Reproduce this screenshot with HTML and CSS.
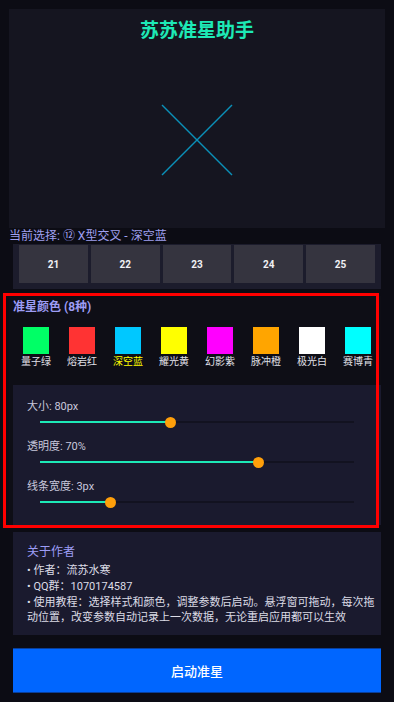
FILE: index.html
```html
<!DOCTYPE html>
<html lang="zh">
<head>
<meta charset="utf-8">
<title>苏苏准星助手</title>
<link rel="stylesheet" href="styles.css">
</head>
<body>
<div class="page">
  <section class="preview">
    <h1 class="title">苏苏准星助手</h1>
    <svg class="cross" width="72" height="72" viewBox="0 0 72 72">
      <line x1="1" y1="1" x2="71" y2="71" stroke="#0a90b8" stroke-width="1.4"/>
      <line x1="71" y1="1" x2="1" y2="71" stroke="#0a90b8" stroke-width="1.4"/>
    </svg>
  </section>
  <div class="current">当前选择: ⑫ X型交叉 - 深空蓝</div>
  <div class="styles-row">
    <div class="style-btn">21</div>
    <div class="style-btn">22</div>
    <div class="style-btn">23</div>
    <div class="style-btn">24</div>
    <div class="style-btn">25</div>
  </div>
  <section class="colors">
    <div class="highlight"></div>
    <div class="colors-title">准星颜色 (8种)</div>
    <div class="swatches">
      <div class="swatch-item"><div class="swatch" style="background:#00ff66"></div><span class="swatch-label">量子绿</span></div>
      <div class="swatch-item"><div class="swatch" style="background:#ff3333"></div><span class="swatch-label">熔岩红</span></div>
      <div class="swatch-item"><div class="swatch" style="background:#00c8ff"></div><span class="swatch-label selected">深空蓝</span></div>
      <div class="swatch-item"><div class="swatch" style="background:#ffff00"></div><span class="swatch-label">耀光黄</span></div>
      <div class="swatch-item"><div class="swatch" style="background:#ff00ff"></div><span class="swatch-label">幻影紫</span></div>
      <div class="swatch-item"><div class="swatch" style="background:#ffa500"></div><span class="swatch-label">脉冲橙</span></div>
      <div class="swatch-item"><div class="swatch" style="background:#ffffff"></div><span class="swatch-label">极光白</span></div>
      <div class="swatch-item"><div class="swatch" style="background:#00ffff"></div><span class="swatch-label">赛博青</span></div>
    </div>
    <div class="sliders">
      <div class="slider-item">
        <div class="slider-label">大小: 80px</div>
        <div class="slider"><div class="track"><div class="fill" style="width:41.7%"><span class="thumb"></span></div></div></div>
      </div>
      <div class="slider-item">
        <div class="slider-label">透明度: 70%</div>
        <div class="slider"><div class="track"><div class="fill" style="width:69.7%"><span class="thumb"></span></div></div></div>
      </div>
      <div class="slider-item">
        <div class="slider-label">线条宽度: 3px</div>
        <div class="slider"><div class="track"><div class="fill" style="width:22.3%"><span class="thumb"></span></div></div></div>
      </div>
    </div>
  </section>
  <section class="about">
    <div class="about-title">关于作者</div>
    <p class="about-line">• 作者：流苏水寒</p>
    <p class="about-line">• QQ群：1070174587</p>
    <p class="about-line">• 使用教程：选择样式和颜色，调整参数后启动。悬浮窗可拖动，每次拖动位置，改变参数自动记录上一次数据，无论重启应用都可以生效</p>
  </section>
  <button class="start">启动准星</button>
</div>
</body>
</html>
```
FILE: styles.css
```css
* { box-sizing: border-box; }
html, body {
  margin: 0;
  padding: 0;
  background: #0c0c14;
  height: 702px;
  overflow: hidden;
}
body {
  font-family: Roboto, "Noto Sans CJK SC", sans-serif;
  color: #dcdce6;
}
.page {
  display: flex;
  flex-direction: column;
  padding-top: 9px;
}
.preview {
  margin: 0 9px;
  height: 219px;
  background: #151520;
  display: flex;
  flex-direction: column;
  align-items: center;
}
.title {
  margin: 9px 0 0;
  font-size: 19px;
  line-height: 26px;
  font-weight: 700;
  color: #1de9b6;
}
.cross {
  margin-top: 60px;
}
.current {
  padding-left: 9px;
  font-size: 12px;
  line-height: 16px;
  color: #a0a0f0;
}
.styles-row {
  margin: 0 13px;
  background: #1c1c2c;
  padding: 1px 6px 6px;
  display: flex;
  gap: 3px;
}
.style-btn {
  flex: 1;
  height: 38px;
  background: #35343f;
  color: #f0f0f4;
  font-size: 10px;
  font-weight: 700;
  display: flex;
  align-items: center;
  justify-content: center;
}
.colors {
  position: relative;
  margin: 7px 13px 0 9px;
  background: #0e0e16;
}
.highlight {
  position: absolute;
  left: -6px;
  right: 2px;
  top: -3px;
  bottom: -3px;
  border: 3px solid #ff0000;
  pointer-events: none;
}
.colors-title {
  padding: 3px 0 0 4px;
  font-size: 12px;
  line-height: 16px;
  font-weight: 700;
  color: #9d9df5;
}
.swatches {
  display: flex;
  padding: 12px 0 0 4px;
  height: 70px;
}
.swatch-item {
  width: 46px;
  display: flex;
  flex-direction: column;
  align-items: center;
}
.swatch {
  width: 26px;
  height: 27px;
}
.swatch-label {
  margin-top: 2px;
  font-size: 10px;
  line-height: 12px;
  color: #e0e0e8;
}
.swatch-label.selected {
  color: #ffff00;
}
.sliders {
  margin-left: 4px;
  background: #1a1a2e;
  padding: 14px 27px 15px 14px;
}
.slider-item + .slider-item {
  margin-top: 9px;
}
.slider-label {
  font-size: 11px;
  line-height: 15px;
  color: #c8c8dc;
}
.slider {
  height: 16px;
  margin-left: 13px;
  display: flex;
  align-items: center;
}
.track {
  flex: 1;
  height: 2px;
  background: #121220;
}
.fill {
  position: relative;
  height: 2px;
  background: #1de9b6;
}
.thumb {
  position: absolute;
  right: -5.5px;
  top: -4.5px;
  width: 11px;
  height: 11px;
  border-radius: 50%;
  background: #ff9f0a;
}
.about {
  margin: 7px 13px 0;
  background: #1a1a2e;
  padding: 12px 4px 9px 14px;
}
.about-title {
  font-size: 12px;
  line-height: 16px;
  color: #9d9df5;
  margin-bottom: 3px;
}
.about-line {
  margin: 0 0 1px;
  font-size: 11px;
  line-height: 15px;
  color: #dcdce6;
}
.start {
  margin: 13px 13px 0;
  height: 45px;
  background: #0066ff;
  border: none;
  border-top: 1px solid #0a3f9a;
  border-bottom: 1px solid #0a3f9a;
  color: #ffffff;
  font-family: Roboto, "Noto Sans CJK SC", sans-serif;
  font-size: 13px;
  font-weight: 500;
}
```
